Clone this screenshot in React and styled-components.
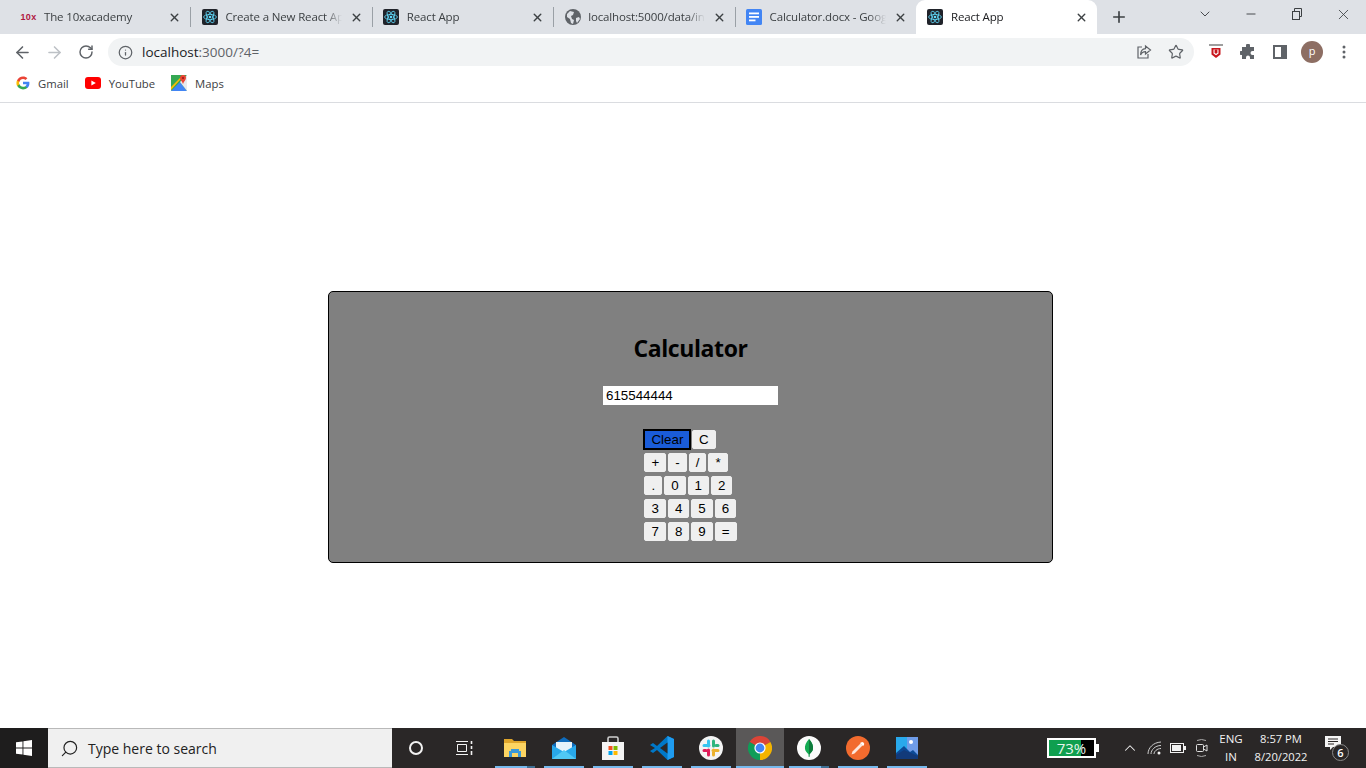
import React from "react";
import styled, { createGlobalStyle } from "styled-components";
import { ArrowLeft, ArrowRight, RotateCw, Info, Star, X, Plus, ChevronDown, Minus, ChevronUp, Search } from "lucide-react";

const GlobalStyle = createGlobalStyle`
  html, body { margin: 0; padding: 0; height: 100%; background: #fff; overflow: hidden; }
  #root { height: 100%; }
  * { box-sizing: border-box; }
`;

const UI_FONT = `"Open Sans", "Noto Sans", sans-serif`;
const ARIAL = `"Liberation Sans", Arial, sans-serif`;

const Page = styled.div`
  height: 768px;
  display: flex;
  flex-direction: column;
  font-family: ${UI_FONT};
`;

/* ---------- chrome: tabs ---------- */
const TabStrip = styled.div`
  height: 34px;
  background: #dee1e6;
  display: flex;
  align-items: stretch;
  padding-left: 9px;
  flex-shrink: 0;
`;
const Tab = styled.div`
  width: 181.4px;
  display: flex;
  align-items: center;
  padding: 0 8px 0 11.5px;
  gap: 7.5px;
  position: relative;
  background: ${(p) => (p.$active ? "#fff" : "transparent")};
  border-radius: ${(p) => (p.$active ? "9px 9px 0 0" : "0")};
  color: ${(p) => (p.$active ? "#202124" : "#3c4043")};
  &::after {
    content: "";
    display: ${(p) => (p.$sep ? "block" : "none")};
    position: absolute;
    right: -1px;
    top: 7px;
    height: 20px;
    width: 1px;
    background: #9aa0a6;
  }
`;
const TabTitle = styled.span`
  flex: 1;
  min-width: 0;
  font-size: 11.5px;
  letter-spacing: -0.15px;
  line-height: 16px;
  white-space: nowrap;
  overflow: hidden;
  -webkit-mask-image: linear-gradient(to right, #000 85%, transparent 100%);
  mask-image: linear-gradient(to right, #000 85%, transparent 100%);
`;
const TabClose = styled(X)`
  width: 13px;
  height: 13px;
  color: #3c4043;
  flex-shrink: 0;
  margin-right: 1px;
`;
const Favicon = styled.span`
  width: 16px;
  height: 16px;
  flex-shrink: 0;
  display: flex;
  align-items: center;
  justify-content: center;
`;
const TenXMark = styled.span`
  font-family: ${ARIAL};
  font-size: 9px;
  font-weight: 700;
  letter-spacing: 0.3px;
  color: #b0173f;
`;
const NewTab = styled(Plus)`
  width: 18px;
  height: 18px;
  color: #3c4043;
  margin: 8px 0 0 13px;
`;
const WindowControls = styled.div`
  margin-left: auto;
  display: flex;
  align-items: flex-start;
  color: #3c4043;
`;
const WindowButton = styled.span`
  width: 46px;
  height: 28px;
  display: flex;
  align-items: center;
  justify-content: center;
`;

/* ---------- chrome: toolbar ---------- */
const Toolbar = styled.div`
  height: 34px;
  padding-top: 2px;
  background: #fff;
  display: flex;
  align-items: center;
  flex-shrink: 0;
  color: #5f6368;
`;
const NavButton = styled.span`
  width: 32px;
  height: 32px;
  display: flex;
  align-items: center;
  justify-content: center;
  color: ${(p) => (p.$muted ? "#bdc1c6" : "#5f6368")};
`;
const NavGroup = styled.div`
  display: flex;
  padding-left: 6px;
  width: 108px;
`;
const Omnibox = styled.div`
  width: 1086px;
  height: 28px;
  border-radius: 14px;
  background: #f1f3f4;
  display: flex;
  align-items: center;
  padding: 0 2px 0 10px;
`;
const Url = styled.span`
  margin-left: 9px;
  flex: 1;
  font-size: 13.5px;
  color: #5f6368;
`;
const UrlHost = styled.span`
  color: #202124;
`;
const OmniIcon = styled.span`
  width: 32px;
  display: flex;
  justify-content: center;
`;
const Extensions = styled.div`
  display: flex;
  align-items: center;
  margin-left: 6px;
`;
const ExtSlot = styled.span`
  width: 32px;
  display: flex;
  justify-content: center;
  align-items: center;
`;
const Avatar = styled.span`
  width: 22px;
  height: 22px;
  border-radius: 50%;
  background: #8d6e63;
  color: #fff;
  font-size: 11px;
  line-height: 20px;
  text-align: center;
`;

/* ---------- chrome: bookmarks ---------- */
const BookmarkBar = styled.div`
  height: 35px;
  background: #fff;
  border-bottom: 1px solid #dadce0;
  display: flex;
  align-items: center;
  padding: 0 0 4px 16px;
  gap: 16px;
  flex-shrink: 0;
`;
const Bookmark = styled.span`
  display: flex;
  align-items: center;
  gap: 8px;
  font-size: 11.3px;
  color: #3c4043;
`;

/* ---------- calculator ---------- */
const Main = styled.main`
  flex: 1;
  background: #fff;
  padding: 188px 0 0 328px;
`;
const Card = styled.section`
  width: 725px;
  height: 272px;
  background: #808080;
  border: 1px solid #000;
  border-radius: 5px;
  padding-top: 40px;
  display: flex;
  flex-direction: column;
  align-items: center;
`;
const Title = styled.h1`
  margin: 0;
  font-size: 23px;
  letter-spacing: -0.4px;
  line-height: 33px;
  font-weight: 700;
  color: #000;
`;
const Display = styled.input`
  margin-top: 21px;
  width: 175px;
  height: 19px;
  border: 0;
  padding: 1px 3px;
  background: #fff;
  color: #000;
  font: 13.33px ${ARIAL};
  outline: none;
`;
const Keypad = styled.div`
  margin-top: 25px;
  display: flex;
  flex-direction: column;
  gap: 4px;
  align-items: flex-start;
`;
const KeyRow = styled.div`
  display: flex;
  gap: 2px;
`;
const Key = styled.button`
  height: 19px;
  padding: 1px 6px;
  border: 1px solid #efefef;
  border-radius: 2px;
  background: #efefef;
  color: #000;
  font: 13.33px ${ARIAL};
`;
const FocusKey = styled(Key)`
  background: #1a5cd8;
  border-color: #1a5cd8;
  border-radius: 0;
  outline: 2px solid #000;
  outline-offset: -1px;
  margin-right: -0.4px;
`;

/* ---------- windows taskbar ---------- */
const Taskbar = styled.footer`
  height: 40px;
  background: #2a2727;
  display: flex;
  align-items: stretch;
  flex-shrink: 0;
  color: #fff;
`;
const StartButton = styled.span`
  width: 48px;
  background: #1e1d1d;
  display: flex;
  align-items: center;
  justify-content: center;
`;
const SearchBox = styled.div`
  width: 344px;
  background: #f0f0f0;
  border-top: 1px solid #b9b9b9;
  border-bottom: 1px solid #b9b9b9;
  display: flex;
  align-items: center;
  padding-left: 12px;
  gap: 9px;
  color: #222;
  font-size: 14px;
`;
const SearchGlyph = styled(Search)`
  width: 19px;
  height: 19px;
  transform: scaleX(-1);
  color: #222;
`;
const ShellButton = styled.span`
  width: 48px;
  display: flex;
  align-items: center;
  justify-content: center;
`;
const TaskItems = styled.div`
  display: flex;
  gap: 1px;
  margin-left: 3px;
`;
const TaskItem = styled.span`
  width: 48px;
  position: relative;
  display: flex;
  align-items: center;
  justify-content: center;
  background: ${(p) => (p.$active ? "#5a5858" : "transparent")};
  &::after {
    content: "";
    position: absolute;
    bottom: 0;
    height: 2px;
    left: ${(p) => (p.$active ? "0" : "4px")};
    right: ${(p) => (p.$active ? "0" : "4px")};
    background: ${(p) => (p.$stacked
      ? "linear-gradient(to right, #76b9ed 80%, #3f6f93 80%)"
      : "#76b9ed")};
  }
`;
const Tray = styled.div`
  margin-left: auto;
  display: flex;
  align-items: center;
  font-size: 11.5px;
`;
const BatteryMeter = styled.span`
  position: relative;
  width: 49px;
  height: 20px;
  border: 2px solid #fff;
  background: linear-gradient(to right, #0f9f4f 0 32px, #000 32px);
  color: #e8f5ec;
  font: 15px/16px ${UI_FONT};
  text-align: center;
  margin-right: 22px;
  &::after {
    content: "";
    position: absolute;
    right: -5px;
    top: 4px;
    width: 3px;
    height: 8px;
    background: #fff;
  }
`;
const TrayIcon = styled.span`
  width: ${(p) => p.$w || 24}px;
  display: flex;
  align-items: center;
  justify-content: center;
`;
const TrayText = styled.span`
  width: ${(p) => p.$w}px;
  text-align: center;
  line-height: 18px;
  color: #f2f2f2;
`;
const ClockText = styled(TrayText)`
  margin: 0 5px 0 3px;
  font-size: 11.2px;
`;
const Notifications = styled.span`
  width: 50px;
  height: 30px;
  position: relative;
  padding: 3px 0 0 9px;
`;
const NotifBadge = styled.span`
  position: absolute;
  left: 16px;
  top: 11px;
  width: 17px;
  height: 17px;
  border-radius: 50%;
  border: 1px solid #8a8a8a;
  background: #2a2727;
  font-size: 11px;
  line-height: 15px;
  text-align: center;
  font-weight: 600;
`;

/* ---------- drawings ---------- */
const ReactIcon = () => (
  <svg width="16" height="16" viewBox="0 0 16 16">
    <rect width="16" height="16" rx="2" fill="#20232a" />
    <g fill="none" stroke="#61dafb" strokeWidth="0.8">
      <ellipse cx="8" cy="8" rx="6.4" ry="2.6" />
      <ellipse cx="8" cy="8" rx="6.4" ry="2.6" transform="rotate(60 8 8)" />
      <ellipse cx="8" cy="8" rx="6.4" ry="2.6" transform="rotate(120 8 8)" />
    </g>
    <circle cx="8" cy="8" r="1.3" fill="#61dafb" />
  </svg>
);
const GlobeIcon = () => (
  <svg width="16" height="16" viewBox="0 0 16 16">
    <circle cx="8" cy="8" r="8" fill="#5f6368" />
    <path d="M2 5l3-3 4 1-1 3-2 1 1 3 2 1-1 4-2-1-1-4-3-2zM11 9l3-1 1 2-3 4-1-2z" fill="#dee1e6" />
  </svg>
);
const DocsIcon = () => (
  <svg width="16" height="16" viewBox="0 0 16 16">
    <rect width="16" height="16" rx="1.5" fill="#4285f4" />
    <rect x="3" y="3.5" width="10" height="1.8" fill="#fff" />
    <rect x="3" y="7" width="10" height="1.8" fill="#fff" />
    <rect x="3" y="10.5" width="6.5" height="1.8" fill="#fff" />
  </svg>
);
const RestoreIcon = () => (
  <svg width="12" height="12" viewBox="0 0 12 12" fill="none" stroke="currentColor">
    <rect x="1.5" y="3.5" width="7" height="8" />
    <path d="M3.5 3.5v-3h7v8h-2" />
  </svg>
);
const ShareIcon = () => (
  <svg width="16" height="16" viewBox="0 0 16 16" fill="none" stroke="#5f6368" strokeWidth="1.2">
    <path d="M6 3H2v11h10v-4" />
    <path d="M9.5 2l5 4-5 4V7.6C7 7.6 5.5 8.6 4.6 11c0-3.6 1.6-6.2 4.9-6.4z" />
  </svg>
);
const ShieldIcon = () => (
  <svg width="16" height="18" viewBox="0 0 16 18">
    <rect x="1" y="1" width="14" height="2" fill="#9e9e9e" />
    <path d="M3.5 5h9v6.5L8 15l-4.5-3.5z" fill="#c8161d" />
    <path d="M5.5 6.5v4L8 12.2l2.5-1.7v-4z" fill="#fff" />
    <path d="M6.6 6.5v3.4L8 10.8l1.4-.9V6.5z" fill="#c8161d" />
  </svg>
);
const PuzzleIcon = () => (
  <svg width="16" height="16" viewBox="0 0 16 16" fill="#5f6368">
    <path d="M6 1.5a2 2 0 0 1 4 0V3h4v4h-1.5a2 2 0 0 0 0 4H14v4H10v-1.5a2 2 0 0 0-4 0V15H2v-4H.9a2 2 0 0 1 0-4H2V3h4z" />
  </svg>
);
const PanelIcon = () => (
  <svg width="14" height="14" viewBox="0 0 14 14">
    <path d="M0 0h14v14H0z M2 2v10h6V2z M10 2v10h2V2z" fillRule="evenodd" fill="#5f6368" />
    <rect x="9" y="2" width="3" height="10" fill="#5f6368" />
  </svg>
);
const DotsIcon = () => (
  <svg width="4" height="14" viewBox="0 0 4 14" fill="#5f6368">
    <circle cx="2" cy="2" r="1.5" />
    <circle cx="2" cy="7" r="1.5" />
    <circle cx="2" cy="12" r="1.5" />
  </svg>
);
const GoogleIcon = () => (
  <svg width="14" height="14" viewBox="0 0 48 48">
    <path fill="#4285f4" d="M46 24.5c0-1.6-.1-3.1-.4-4.5H24v8.6h12.4c-.5 2.8-2.1 5.2-4.5 6.8v5.600h7.3C43.5 37 46 31.3 46 24.5z" />
    <path fill="#34a853" d="M24 46c6.100 0 11.200-2 14.900-5.500l-7.300-5.600c-2 1.400-4.600 2.200-7.600 2.200-5.900 0-10.900-4-12.700-9.300H3.800v5.800C7.500 40.900 15.200 46 24 46z" />
    <path fill="#fbbc05" d="M11.300 28.800c-.5-1.400-.7-2.900-.7-4.800s.3-3.400.7-4.800v-5.800H3.800C2.300 16.400 1.400 20 1.400 24s.9 7.600 2.400 10.600z" />
    <path fill="#ea4335" d="M24 10.600c3.300 0 6.300 1.100 8.600 3.400l6.500-6.500C35.200 3.900 30.100 1.800 24 1.800 15.200 1.800 7.500 6.900 3.800 14.400l7.500 5.800c1.800-5.300 6.800-9.600 12.700-9.600z" />
  </svg>
);
const YouTubeIcon = () => (
  <svg width="16" height="12" viewBox="0 0 16 12">
    <rect width="16" height="12" rx="3" fill="#f00" />
    <path d="M6.4 3.4L10.8 6l-4.400 2.600z" fill="#fff" />
  </svg>
);
const MapsIcon = () => (
  <svg width="16" height="16" viewBox="0 0 16 16">
    <rect width="16" height="16" rx="1" fill="#34a853" />
    <path d="M0 16L9 7l7 9z" fill="#4285f4" />
    <path d="M9 7l7-7v16z" fill="#e8eaed" />
    <path d="M0 12L12 0h1.500L0 15z" fill="#fbbc05" />
    <path d="M5 3L8 0H0v6z" fill="#34a853" />
    <path d="M12 0a3 3 0 0 1 3 3c0 2-2 3-3 6-1-3-3-4-3-6a3 3 0 0 1 3-3z" fill="#ea4335" />
    <circle cx="12" cy="3" r="1" fill="#8c1c13" />
  </svg>
);
const WindowsLogo = () => (
  <svg width="16" height="16" viewBox="0 0 16 16" fill="#fff">
    <path d="M0 2.3l6.500-.9v6.200H0zM7.400 1.300L16 0v7.600H7.400zM0 8.400h6.500v6.200L0 13.700zM7.400 8.400H16V16l-8.600-1.300z" />
  </svg>
);
const CortanaIcon = () => (
  <svg width="16" height="16" viewBox="0 0 16 16" fill="none" stroke="#f2f2f2" strokeWidth="2">
    <circle cx="8" cy="8" r="6" />
  </svg>
);
const TaskViewIcon = () => (
  <svg width="17" height="14" viewBox="0 0 17 14" fill="none" stroke="#f2f2f2">
    <path d="M0 .5h12M0 13.500h12M1.500 3.500h9v7h-9z" />
    <path d="M15.500 0v3M15.500 5v3M15.500 10v4" strokeWidth="1.6" />
  </svg>
);
const FolderIcon = () => (
  <svg width="22" height="20" viewBox="0 0 22 20">
    <path d="M0 1h8l2 2h12v15H0z" fill="#dfa52b" />
    <rect y="5" width="22" height="14" fill="#fcd462" />
    <path d="M7 11h8v2h2v6h-3v-4H8v4H5v-6h2z" fill="#3a98d8" />
  </svg>
);
const MailIcon = () => (
  <svg width="24" height="22" viewBox="0 0 24 22">
    <path d="M12 0l12 8v14H0V8z" fill="#0f6cbd" />
    <path d="M4 5h16v9l-8 4-8-4z" fill="#e6f3fb" />
    <path d="M0 8l12 7 12-7v14H0z" fill="#28a8ea" />
    <path d="M0 22l12-9 12 9z" fill="#50c8f5" />
  </svg>
);
const StoreIcon = () => (
  <svg width="24" height="24" viewBox="0 0 24 24">
    <path d="M7 6V2.500Q7 1 8.500 1h7Q17 1 17 2.500V6" fill="none" stroke="#cfcfcf" strokeWidth="1.6" />
    <rect x="1" y="6" width="22" height="18" fill="#f4f4f4" />
    <rect x="7.5" y="10" width="4" height="4" fill="#f25022" />
    <rect x="12.5" y="10" width="4" height="4" fill="#7fba00" />
    <rect x="7.5" y="15" width="4" height="4" fill="#00a4ef" />
    <rect x="12.5" y="15" width="4" height="4" fill="#ffb900" />
  </svg>
);
const VSCodeIcon = () => (
  <svg width="24" height="24" viewBox="0 0 24 24">
    <path d="M17.500 0L24 3v18l-6.500 3L7 14l-4 3-3-2 5-3-5-3 3-2 4 3z" fill="#0078c8" />
    <path d="M17.500 0L24 3v18l-6.500 3z" fill="#1f9cf0" />
    <path d="M17.500 6.500v11L10 12z" fill="#2b2828" />
  </svg>
);
const SlackIcon = () => (
  <svg width="24" height="24" viewBox="0 0 24 24">
    <circle cx="12" cy="12" r="12" fill="#f4f4f4" />
    <g strokeWidth="3" strokeLinecap="round" fill="none">
      <path d="M9.500 5v5M5 9.500h5" stroke="#36c5f0" />
      <path d="M14.500 5v5" stroke="#2eb67d" />
      <path d="M19 9.500h-2" stroke="#2eb67d" />
      <path d="M14.500 19v-5M19 14.500h-5" stroke="#ecb22e" />
      <path d="M9.500 14v5M5 14.500h2" stroke="#e01e5a" />
    </g>
  </svg>
);
const ChromeIcon = () => (
  <svg width="24" height="24" viewBox="0 0 24 24">
    <path d="M12 12L1.600 6A12 12 0 0 1 22.400 6Z" fill="#db4437" />
    <path d="M12 12L22.400 6A12 12 0 0 1 12 24Z" fill="#f4b400" />
    <path d="M12 12L12 24A12 12 0 0 1 1.600 6Z" fill="#0f9d58" />
    <circle cx="12" cy="12" r="5.6" fill="#fff" />
    <circle cx="12" cy="12" r="4.4" fill="#4285f4" />
  </svg>
);
const MongoIcon = () => (
  <svg width="24" height="24" viewBox="0 0 24 24">
    <circle cx="12" cy="12" r="12" fill="#fbfbfb" />
    <path d="M12 3c3 3.500 4.500 6.500 4 10-.4 2.500-2.500 4-3.400 5l-.3 3h-.6l-.3-3c-1-1-3-2.500-3.400-5-.5-3.500 1-6.500 4-10z" fill="#13aa52" />
    <path d="M12 3v18h.3l.3-3c1-1 3-2.500 3.400-5 .5-3.500-1-6.500-4-10z" fill="#0d7a3b" />
  </svg>
);
const PostmanIcon = () => (
  <svg width="24" height="24" viewBox="0 0 24 24">
    <circle cx="12" cy="12" r="12" fill="#f26b2e" />
    <path d="M5.500 18.500l1-3 8-8 2 2-8 8z" fill="#fde7dc" />
    <path d="M15 6.500a2 2 0 0 1 3 2.500l-1 1-3-3z" fill="#fff" />
  </svg>
);
const PhotosIcon = () => (
  <svg width="22" height="22" viewBox="0 0 22 22">
    <rect width="22" height="22" fill="#29a9ec" />
    <path d="M11 0h11v22H11z" fill="#6f9ce8" />
    <circle cx="15" cy="5" r="2" fill="#fff" />
    <path d="M0 16l8-7 6 6 3-2 5 5v4H0z" fill="#0c4a96" />
    <path d="M0 18l8-5 14 6v3H0z" fill="#123a7a" />
  </svg>
);
const WifiIcon = () => (
  <svg width="16" height="14" viewBox="0 0 16 14" fill="none" stroke="#cfcfcf">
    <path d="M1 13C1 7 6 1.500 14 1M4 13c0-4 4-8.500 10-8.500M7 13c0-2.500 3-5.500 7-5.500" />
    <circle cx="12" cy="12" r="1.5" fill="#f2f2f2" stroke="none" />
  </svg>
);
const TrayBatteryIcon = () => (
  <svg width="16" height="10" viewBox="0 0 16 10">
    <rect x="0.5" y="0.5" width="13" height="9" fill="none" stroke="#f2f2f2" />
    <rect x="2" y="2" width="9" height="6" fill="#f2f2f2" />
    <rect x="14" y="3" width="2" height="4" fill="#f2f2f2" />
  </svg>
);
const MeetIcon = () => (
  <svg width="13" height="20" viewBox="0 0 13 20" fill="none" stroke="#e0e0e0">
    <rect x="1.5" y="6.5" width="7" height="7" rx="1" />
    <path d="M8.500 9l3.500-2v6l-3.500-2" />
    <path d="M2 2.500q4.500-2 9 0M2 17.500q4.500 2 9 0" stroke="#aaa" />
  </svg>
);
const NotifIcon = () => (
  <svg width="16" height="15" viewBox="0 0 16 15">
    <path d="M0 0h16v11H8l-3 3v-3H0z" fill="#f5f5f5" />
    <path d="M3 3h10M3 5.500h10M3 8h6" stroke="#2a2727" />
  </svg>
);

const TABS = [
  { icon: <TenXMark>10x</TenXMark>, title: "The 10xacademy", sep: true },
  { icon: <ReactIcon />, title: "Create a New React App", sep: true },
  { icon: <ReactIcon />, title: "React App", sep: true },
  { icon: <GlobeIcon />, title: "localhost:5000/data/info", sep: true },
  { icon: <DocsIcon />, title: "Calculator.docx - Google Docs" },
  { icon: <ReactIcon />, title: "React App", active: true },
];

const TASK_ITEMS = [
  { icon: <FolderIcon />, stacked: true },
  { icon: <MailIcon /> },
  { icon: <StoreIcon /> },
  { icon: <VSCodeIcon /> },
  { icon: <SlackIcon /> },
  { icon: <ChromeIcon />, active: true },
  { icon: <MongoIcon />, stacked: true },
  { icon: <PostmanIcon /> },
  { icon: <PhotosIcon /> },
];

const KEY_ROWS = [
  ["+", "-", "/", "*"],
  [".", "0", "1", "2"],
  ["3", "4", "5", "6"],
  ["7", "8", "9", "="],
];

const App = () => {
  return (
    <Page>
      <GlobalStyle />
      <TabStrip>
        {TABS.map((t, i) => (
          <Tab key={i} $active={t.active} $sep={t.sep}>
            <Favicon>{t.icon}</Favicon>
            <TabTitle>{t.title}</TabTitle>
            <TabClose strokeWidth={2.6} />
          </Tab>
        ))}
        <NewTab strokeWidth={2.2} />
        <WindowControls>
          <WindowButton><ChevronDown size={16} strokeWidth={1.4} /></WindowButton>
          <WindowButton><Minus size={14} strokeWidth={1.6} /></WindowButton>
          <WindowButton><RestoreIcon /></WindowButton>
          <WindowButton><X size={17} strokeWidth={1.2} /></WindowButton>
        </WindowControls>
      </TabStrip>

      <Toolbar>
        <NavGroup>
          <NavButton><ArrowLeft size={19} strokeWidth={2} /></NavButton>
          <NavButton $muted><ArrowRight size={19} strokeWidth={2} /></NavButton>
          <NavButton><RotateCw size={16} strokeWidth={2.2} /></NavButton>
        </NavGroup>
        <Omnibox>
          <Info size={15} strokeWidth={2} />
          <Url><UrlHost>localhost</UrlHost>:3000/?4=</Url>
          <OmniIcon><ShareIcon /></OmniIcon>
          <OmniIcon><Star size={16} strokeWidth={1.8} /></OmniIcon>
        </Omnibox>
        <Extensions>
          <ExtSlot><ShieldIcon /></ExtSlot>
          <ExtSlot><PuzzleIcon /></ExtSlot>
          <ExtSlot><PanelIcon /></ExtSlot>
          <ExtSlot><Avatar>p</Avatar></ExtSlot>
          <ExtSlot><DotsIcon /></ExtSlot>
        </Extensions>
      </Toolbar>

      <BookmarkBar>
        <Bookmark><GoogleIcon /> Gmail</Bookmark>
        <Bookmark><YouTubeIcon /> YouTube</Bookmark>
        <Bookmark><MapsIcon /> Maps</Bookmark>
      </BookmarkBar>

      <Main>
        <Card>
          <Title>Calculator</Title>
          <Display readOnly value="615544444" />
          <Keypad>
            <KeyRow>
              <FocusKey>Clear</FocusKey>
              <Key>C</Key>
            </KeyRow>
            {KEY_ROWS.map((row) => (
              <KeyRow key={row.join("")}>
                {row.map((k) => <Key key={k}>{k}</Key>)}
              </KeyRow>
            ))}
          </Keypad>
        </Card>
      </Main>

      <Taskbar>
        <StartButton><WindowsLogo /></StartButton>
        <SearchBox>
          <SearchGlyph strokeWidth={1.5} />
          <span>Type here to search</span>
        </SearchBox>
        <ShellButton><CortanaIcon /></ShellButton>
        <ShellButton><TaskViewIcon /></ShellButton>
        <TaskItems>
          {TASK_ITEMS.map((t, i) => (
            <TaskItem key={i} $active={t.active} $stacked={t.stacked}>{t.icon}</TaskItem>
          ))}
        </TaskItems>
        <Tray>
          <BatteryMeter>73%</BatteryMeter>
          <TrayIcon $w={24}><ChevronUp size={18} strokeWidth={1.4} color="#f2f2f2" /></TrayIcon>
          <TrayIcon $w={26}><WifiIcon /></TrayIcon>
          <TrayIcon $w={20}><TrayBatteryIcon /></TrayIcon>
          <TrayIcon $w={26}><MeetIcon /></TrayIcon>
          <TrayText $w={34}>ENG<br />IN</TrayText>
          <ClockText $w={60}>8:57 PM<br />8/20/2022</ClockText>
          <Notifications>
            <NotifIcon />
            <NotifBadge>6</NotifBadge>
          </Notifications>
        </Tray>
      </Taskbar>
    </Page>
  );
};

export default App;
